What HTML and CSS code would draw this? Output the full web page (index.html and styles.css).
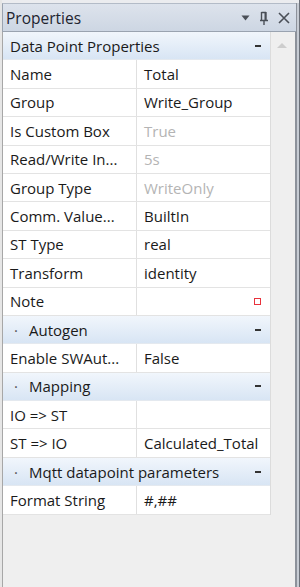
FILE: index.html
```html
<!DOCTYPE html>
<html>
<head>
<meta charset="utf-8">
<link rel="stylesheet" href="styles.css">
</head>
<body>
<div class="frame">
  <div class="topstrip"></div>
  <div class="titlebar">
    <span class="title">Properties</span>
    <div class="tools">
      <svg class="ico" width="9" height="6" viewBox="0 0 9 6"><path d="M0.5 0.5 H8.5 L4.5 5.5 Z" fill="#4a4f57"/></svg>
      <svg class="ico" width="8" height="14" viewBox="0 0 8 14"><path d="M1.5 1 V9 M6 1 V9 M1.5 1.5 H6 M0 9.5 H8 M4 9.5 V14" stroke="#4a4f57" stroke-width="1.4" fill="none"/><rect x="4.5" y="1.5" width="1.5" height="8" fill="#4a4f57"/></svg>
      <svg class="ico" width="12" height="12" viewBox="0 0 12 12"><path d="M1 1 L11 11 M11 1 L1 11" stroke="#4a4f57" stroke-width="1.6"/></svg>
    </div>
  </div>
  <div class="body">
    <div class="grid">
      <div class="cat"><span class="cat-name">Data Point Properties</span><span class="dash"></span></div>
      <div class="row"><div class="k">Name</div><div class="v">Total</div></div>
      <div class="row"><div class="k">Group</div><div class="v">Write_Group</div></div>
      <div class="row"><div class="k">Is Custom Box</div><div class="v dim">True</div></div>
      <div class="row"><div class="k">Read/Write In...</div><div class="v dim">5s</div></div>
      <div class="row"><div class="k">Group Type</div><div class="v dim">WriteOnly</div></div>
      <div class="row"><div class="k">Comm. Value...</div><div class="v">BuiltIn</div></div>
      <div class="row"><div class="k">ST Type</div><div class="v">real</div></div>
      <div class="row"><div class="k">Transform</div><div class="v">identity</div></div>
      <div class="row"><div class="k">Note</div><div class="v note"><span class="redbox"></span></div></div>
      <div class="cat sub"><span class="dot">·</span><span class="cat-name">Autogen</span><span class="dash"></span></div>
      <div class="row"><div class="k">Enable SWAut...</div><div class="v">False</div></div>
      <div class="cat sub"><span class="dot">·</span><span class="cat-name">Mapping</span><span class="dash"></span></div>
      <div class="row"><div class="k">IO =&gt; ST</div><div class="v"></div></div>
      <div class="row"><div class="k">ST =&gt; IO</div><div class="v">Calculated_Total</div></div>
      <div class="cat sub"><span class="dot">·</span><span class="cat-name">Mqtt datapoint parameters</span><span class="dash"></span></div>
      <div class="row"><div class="k">Format String</div><div class="v">#,##</div></div>
    </div>
    <div class="scroll">
      <svg class="up" width="10" height="5" viewBox="0 0 10 5"><path d="M0 5 L5 0 L10 5 Z" fill="#cdcdcd"/></svg>
    </div>
  </div>
</div>
</body>
</html>
```
FILE: styles.css
```css
* { box-sizing: border-box; }
html, body { margin: 0; padding: 0; }
body {
  width: 300px;
  height: 587px;
  overflow: hidden;
  background: #efefef;
  font-family: "Open Sans", "Noto Sans", sans-serif;
  font-size: 15px;
  color: #1a1a1a;
}
.frame {
  height: 587px;
  display: flex;
  flex-direction: column;
  border-right: 1px solid #6c717a;
  box-shadow: inset -2px 0 0 #c7ccd4, inset -4px 0 0 #8d929b;
  border-left: 2px solid #e6e6e6;
}
.topstrip {
  height: 3px;
  background: #ebecef;
}
.titlebar {
  height: 29px;
  display: flex;
  align-items: center;
  justify-content: space-between;
  padding: 0 6px 0 3px;
  margin-right: 3px;
  background: linear-gradient(#dde3ec, #cdd6e3);
  border-top: 1px solid #b3bbc7;
  border-bottom: 1px solid #9aa3b0;
  border-left: 1px solid #9aa3b0;
}
.title { font-size: 15.5px; color: #1e2430; }
.tools { display: flex; align-items: center; gap: 10px; }
.ico { display: block; }
.body {
  flex: 1;
  display: flex;
  margin-right: 4px;
  border-left: 1px solid #a7a7a7;
  align-items: flex-start;
}
.grid {
  width: 268px;
  background: #fff;
  border-right: 1px solid #dcdcdc;
}
.cat {
  height: 28.4px;
  display: flex;
  align-items: center;
  padding: 0 9px 0 7px;
  background: linear-gradient(#f1f6fc, #d8e5f4);
  border-bottom: 1px solid #e4e9ef;
}
.cat .dot { width: 19px; padding-left: 4px; color: #555; }
.cat-name { flex: 1; color: #1a1a1a; }
.dash { width: 6px; height: 2px; background: #333; }
.row {
  height: 28.4px;
  display: flex;
  border-bottom: 1px solid #e3e3e3;
}
.k {
  width: 134px;
  padding-left: 7px;
  display: flex;
  align-items: center;
  border-right: 1px solid #e0e0e0;
  white-space: nowrap;
}
.v {
  flex: 1;
  padding-left: 7px;
  display: flex;
  align-items: center;
  white-space: nowrap;
}
.v.dim { color: #b4b4b4; }
.v.note { justify-content: flex-end; padding-right: 9px; }
.redbox {
  width: 7px;
  height: 7px;
  border: 1.5px solid #e8323c;
}
.scroll {
  flex: 1;
  align-self: stretch;
  display: flex;
  justify-content: center;
  padding-top: 11px;
  padding-right: 3px;
}
.up { display: block; }
```
